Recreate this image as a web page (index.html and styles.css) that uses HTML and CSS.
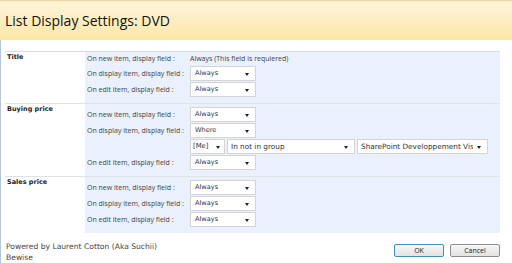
FILE: index.html
```html
<!DOCTYPE html>
<html>
<head>
    <title>List Display Settings: DVD</title>
    <link rel="stylesheet" href="styles.css">
</head>
<body>
    <div class="header">
        <h1 class="title">List Display Settings: DVD</h1>
    </div>

    <div class="page">
        <div class="settings">
            <div class="group">
                <div class="group-name">Title</div>
                <div class="group-fields">
                    <div class="row row-text">
                        <span class="field-label">On new item, display field :</span>
                        <span class="field-note">Always (This field is requiered)</span>
                    </div>
                    <div class="row">
                        <span class="field-label">On display item, display field :</span>
                        <div class="select">Always</div>
                    </div>
                    <div class="row">
                        <span class="field-label">On edit item, display field :</span>
                        <div class="select">Always</div>
                    </div>
                </div>
            </div>

            <div class="group">
                <div class="group-name">Buying price</div>
                <div class="group-fields">
                    <div class="row">
                        <span class="field-label">On new item, display field :</span>
                        <div class="select">Always</div>
                    </div>
                    <div class="row">
                        <span class="field-label">On display item, display field :</span>
                        <div class="select">Where</div>
                    </div>
                    <div class="row">
                        <span class="field-label"></span>
                        <div class="condition">
                            <div class="select select-who">[Me]</div>
                            <div class="select select-op">In not in group</div>
                            <div class="select select-group">SharePoint Developpement Vis</div>
                        </div>
                    </div>
                    <div class="row">
                        <span class="field-label">On edit item, display field :</span>
                        <div class="select">Always</div>
                    </div>
                </div>
            </div>

            <div class="group">
                <div class="group-name">Sales price</div>
                <div class="group-fields">
                    <div class="row">
                        <span class="field-label">On new item, display field :</span>
                        <div class="select">Always</div>
                    </div>
                    <div class="row">
                        <span class="field-label">On display item, display field :</span>
                        <div class="select">Always</div>
                    </div>
                    <div class="row">
                        <span class="field-label">On edit item, display field :</span>
                        <div class="select">Always</div>
                    </div>
                </div>
            </div>
        </div>

        <div class="footer">
            <div class="credit">Powered by Laurent Cotton (Aka Suchii)<br>Bewise</div>
            <div class="buttons">
                <button class="btn btn-ok">OK</button>
                <button class="btn">Cancel</button>
            </div>
        </div>
    </div>
</body>
</html>
```

FILE: styles.css
```css
body { margin: 0; background: white; font-family: "Open Sans", Arial, sans-serif; color: #333; }
.header { height: 40px; background: linear-gradient(#e9cf97 0, #fdf4da 2px, #fde7a6 100%); }
.title { margin: 0; padding: 11px 0 0 5px; font-size: 14px; font-weight: normal; color: #111; line-height: 20px; }
.page { border-left: 1px solid #b6c6d6; padding: 11px 12px 0 4px; min-height: 212px; }
.settings { border-top: 1px solid #d9dde2; }
.group { display: flex; border-top: 1px solid #dfe3e8; }
.group:first-child { border-top: none; }
.group-name { width: 78px; padding-left: 2px; font-family: "DejaVu Sans", Verdana, sans-serif; font-size: 6.5px; font-weight: bold; line-height: 11px; color: #222; }
.group-fields { flex: 1; background: #eaf1fd; padding: 2px 0 6px 2px; }
.group:first-child .group-fields { padding-top: 0; }
.row { display: flex; align-items: center; height: 16px; }
.row-text { height: 13px; }
.field-label { width: 103px; font-size: 7px; color: #444; white-space: nowrap; }
.field-note { font-size: 7px; color: #444; }
.select { position: relative; width: 66px; height: 15px; box-sizing: border-box; border: 1px solid #d4d4d4; background: white; padding-left: 4px; font-family: "DejaVu Sans", Verdana, sans-serif; font-size: 6.6px; line-height: 13px; color: #333; white-space: nowrap; overflow: hidden; }
.select::before { content: ""; position: absolute; right: 0; top: 0; width: 14px; height: 13px; background: white; }
.select::after { content: ""; position: absolute; right: 6px; top: 6px; border-left: 2.5px solid transparent; border-right: 2.5px solid transparent; border-top: 3px solid #222; }
.condition { display: flex; gap: 2px; }
.condition .select { font-size: 7.3px; padding-left: 3px; }
.condition .select-who { width: 35px; font-size: 6.8px; padding-left: 2px; }
.select-who::before { width: 11px; }
.select-who::after { right: 4px; }
.select-op { width: 128px; }
.select-group { width: 131px; }
.footer { display: flex; justify-content: space-between; padding-top: 8px; }
.credit { font-family: "DejaVu Sans", Verdana, sans-serif; font-size: 7.6px; line-height: 11px; color: #444; padding-left: 1px; }
.buttons { display: flex; gap: 6px; padding-top: 3px; }
.btn { width: 50px; height: 13px; padding: 0; border: 1px solid #8d8d8d; border-radius: 2px; background: linear-gradient(#f7f7f7, #e3e3e3); font-family: "Open Sans", Arial, sans-serif; font-size: 7px; line-height: 11px; color: #222; }
.btn-ok { border-color: #3d8fb8; }
```
